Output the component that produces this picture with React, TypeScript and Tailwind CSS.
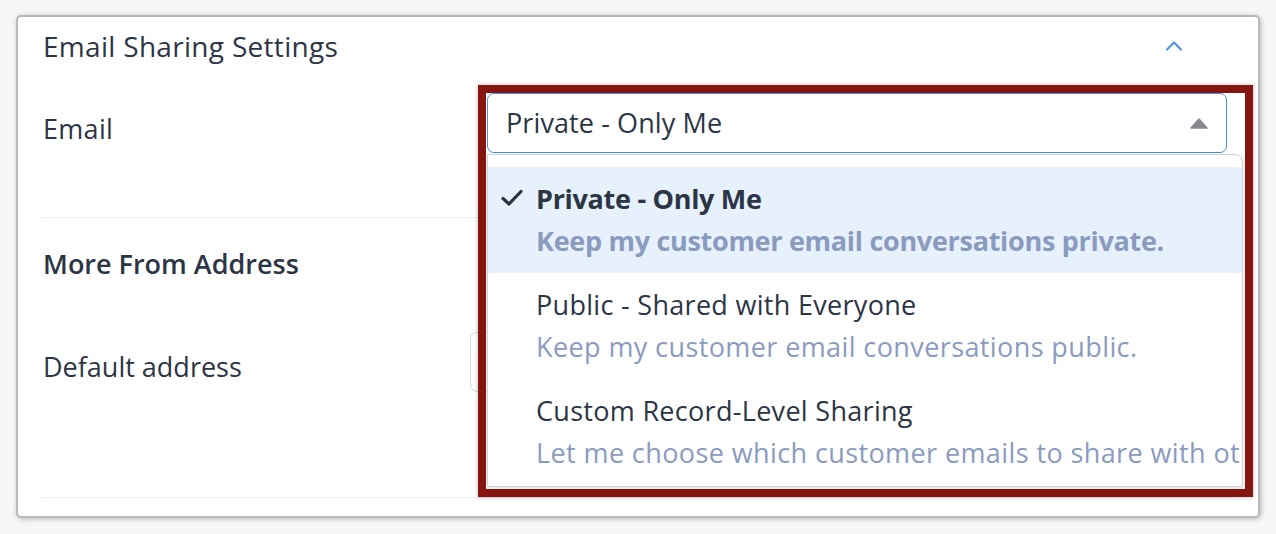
import { ChevronUp } from 'lucide-react'

const options = [
  {
    title: 'Private - Only Me',
    desc: 'Keep my customer email conversations private.',
    selected: true,
  },
  {
    title: 'Public - Shared with Everyone',
    desc: 'Keep my customer email conversations public.',
    selected: false,
  },
  {
    title: 'Custom Record-Level Sharing',
    desc: 'Let me choose which customer emails to share with others.',
    selected: false,
  },
]

function Check() {
  return (
    <svg width="22" height="18" viewBox="0 0 22 18" className="absolute left-[13px] top-[22px]">
      <path d="M2 9.5 L8 15 L20 2.5" fill="none" stroke="#2b3342" strokeWidth="3.2" strokeLinecap="round" strokeLinejoin="round" />
    </svg>
  )
}

export default function App() {
  return (
    <div
      className="w-[1276px] h-[534px] bg-[#f6f6f6] pt-[17px] pl-[18px] overflow-hidden text-[#2c3545]"
      style={{ fontFamily: '"Open Sans", "Noto Sans", sans-serif' }}
    >
      <div className="relative w-[1240px] h-[499px] bg-white rounded-[3px] shadow-[0_0_0_2px_#b9b9b9,1px_1px_5px_2px_rgba(0,0,0,0.25)]">
        {/* header */}
        <div className="h-[58px] flex items-center justify-between pl-[25px] pr-[70px]">
          <span className="text-[28px] font-medium leading-none tracking-[0.3px]">Email Sharing Settings</span>
          <ChevronUp className="w-[28px] h-[28px] text-[#4a8fe2]" strokeWidth={1.8} />
        </div>

        {/* email row */}
        <div className="mt-[18px] flex">
          <div className="w-[469px] pl-[25px] pt-[21px] text-[27px] leading-[30px] tracking-[0.3px]">Email</div>
          <div className="w-[740px] h-[60px] border-[1.5px] border-[#4a8fe2] rounded-[7px] flex items-center justify-between pl-[18px] pr-[18px] text-[27px] tracking-[0.1px]">
            <span>Private - Only Me</span>
            <svg width="18" height="11" viewBox="0 0 18 11">
              <path d="M9 1 L17 10 L1 10 Z" fill="#88898f" stroke="#88898f" strokeWidth="1.5" strokeLinejoin="round" />
            </svg>
          </div>
        </div>

        <div className="mt-[64px] mx-[24px] border-t border-[#eceef2]" />

        {/* more from address */}
        <div className="mt-[31px] pl-[25px] text-[27px] font-semibold leading-[30px]">More From Address</div>

        <div className="mt-[53px] flex items-start">
          <div className="w-[452px] pl-[25px] pt-[20px] text-[27px] leading-[30px]">Default address</div>
          <div className="w-[700px] h-[60px] border border-[#d4d6da] rounded-[7px]" />
        </div>

        <div className="mt-[105px] mx-[24px] border-t border-[#eceef2]" />

        {/* dropdown menu */}
        <div className="absolute left-[469px] top-[137px] w-[756px] h-[333px] bg-white border border-[#cfd1d6] rounded-tr-[8px] overflow-hidden pt-[12px] shadow-[0_2px_6px_rgba(0,0,0,0.12)]">
          {options.map((o) => (
            <div
              key={o.title}
              className={`relative h-[106px] pl-[48px] pt-[16px] whitespace-nowrap ${o.selected ? 'bg-[#e6f1fc]' : ''}`}
            >
              {o.selected && <Check />}
              <div className={`text-[27px] leading-[32px] ${o.selected ? 'font-bold tracking-[-0.3px]' : 'tracking-[0.3px]'}`}>{o.title}</div>
              <div className={`mt-[10px] text-[27px] leading-[32px] text-[#8a9bbf] ${o.selected ? 'font-bold tracking-[-0.3px]' : 'tracking-[0.4px]'}`}>{o.desc}</div>
            </div>
          ))}
        </div>

        {/* highlight frame */}
        <div className="absolute left-[460px] top-[68px] w-[775px] h-[412px] border-[8px] border-[#86140f] pointer-events-none shadow-[0_0_4px_rgba(0,0,0,0.3)]" />
      </div>
    </div>
  )
}
